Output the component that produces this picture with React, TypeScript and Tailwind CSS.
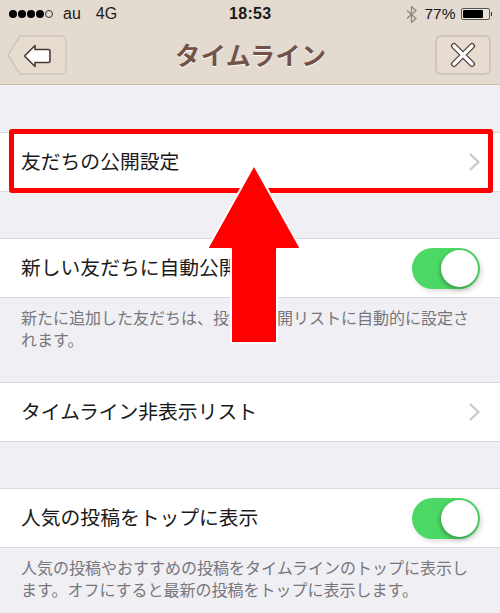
const jpFont = "font-['Liberation_Sans','Noto_Sans_CJK_JP',sans-serif]";

function SignalDots() {
  return (
    <div className="flex items-center gap-[1px]">
      {[0, 1, 2, 3].map((i) => (
        <span key={i} className="h-[8px] w-[8px] rounded-full bg-black" />
      ))}
      <span className="h-[8px] w-[8px] rounded-full border border-[#333]" />
    </div>
  );
}

function StatusBar() {
  return (
    <div className="relative flex h-[28px] items-center justify-between pl-[9px] pr-[8px] text-[16px] text-[#1c1a18]">
      <div className="flex items-center">
        <SignalDots />
        <span className="ml-[10px]">au</span>
        <span className="ml-[15px]">4G</span>
      </div>
      <span className="absolute left-[229px] text-[16px] font-bold tracking-[0.3px]">18:53</span>
      <div className="flex items-center">
        <svg width="11" height="17" viewBox="0 0 11 17" fill="none" stroke="#8a8580" strokeWidth="1.2">
          <path d="M1 4.5l9 8-4.5 4V0.5l4.5 4-9 8" />
        </svg>
        <span className="ml-[7px] text-[15.5px]">77%</span>
        <div className="ml-[5px] flex h-[12px] w-[29px] items-center rounded-[2px] border border-[#555] bg-[#e9e4dc] p-[1px]">
          <div className="h-full w-[80%] rounded-[1px] bg-black" />
        </div>
        <span className="ml-[1px] h-[4px] w-[1.5px] bg-[#333]" />
      </div>
    </div>
  );
}

function NavBar() {
  return (
    <div className="flex h-[57px] items-start justify-between border-b border-[#c9bcaf] pl-[7px] pr-[9px] pt-[7px]">
      <button className="flex h-[40px] w-[60px] items-center justify-center">
        <svg width="60" height="40" viewBox="0 0 60 40">
          <path
            d="M13 1H54a5 5 0 0 1 5 5V34a5 5 0 0 1-5 5H13L1 20Z"
            fill="#e6dcd0"
            stroke="#cfc5b8"
            strokeWidth="1.5"
            strokeLinejoin="round"
          />
          <path
            d="M17.5 21L28 10.5V14.5H41.5a1.5 1.5 0 0 1 1.5 1.5V26a1.5 1.5 0 0 1-1.5 1.5H28V31.5Z"
            fill="#fff"
            stroke="#4b3a33"
            strokeWidth="1.6"
            strokeLinejoin="round"
          />
        </svg>
      </button>
      <h1
        className={`mt-[5px] text-[25px] font-bold leading-[32px] tracking-[0.5px] text-[#73524a] [text-shadow:0_1px_0_#fff] ${jpFont}`}
      >
        タイムライン
      </h1>
      <button className="flex h-[40px] w-[56px] items-center justify-center rounded-[6px] border-2 border-[#cfc5b8] bg-[#e6dcd0]">
        <svg width="26" height="26" viewBox="0 0 26 26" strokeLinecap="round">
          <path d="M4 4L22 22M22 4L4 22" stroke="#4b3a33" strokeWidth="6" />
          <path d="M4 4L22 22M22 4L4 22" stroke="#fff" strokeWidth="3.6" />
        </svg>
      </button>
    </div>
  );
}

function Toggle() {
  return (
    <div className="flex h-[41px] w-[68px] items-center justify-end rounded-full bg-[#4cd864] p-[2px] shadow-[2px_3px_5px_rgba(0,0,0,0.12)]">
      <div className="h-[37px] w-[37px] rounded-full bg-white shadow-[-1px_2px_4px_rgba(0,0,0,0.3)]" />
    </div>
  );
}

function Chevron() {
  return (
    <svg width="11" height="18" viewBox="0 0 11 18" fill="none" stroke="#c7c7cc" strokeWidth="2.2">
      <path d="M1 1L9.5 9L1 17" />
    </svg>
  );
}

function Row({ label, action, className }: { label: string; action: 'chevron' | 'toggle'; className: string }) {
  return (
    <div
      className={`flex h-[60px] items-center justify-between border-y border-[#d9d8dc] bg-white pl-[21px] pr-[20px] text-[19.8px] text-[#1a1a1a] ${className}`}
    >
      <span className="pt-[1px]">{label}</span>
      {action === 'chevron' ? <Chevron /> : <Toggle />}
    </div>
  );
}

function Note({ children }: { children: string }) {
  return <p className="px-[21px] pt-[10px] text-[16px] leading-[22px] text-[#77767b]">{children}</p>;
}

function RedArrow() {
  return (
    <svg className="absolute left-[203px] top-[162px]" width="102" height="184" viewBox="0 0 102 184">
      <path
        d="M51 3L98 87H74V181H28V87H4Z"
        fill="#ff0000"
        stroke="#fff"
        strokeWidth="2"
        strokeLinejoin="round"
      />
    </svg>
  );
}

export default function App() {
  return (
    <div className={`relative h-[613px] w-[500px] overflow-hidden bg-[#efeff4] ${jpFont}`}>
      <div className="bg-[#e3dad0]">
        <StatusBar />
        <NavBar />
      </div>

      <Row label="友だちの公開設定" action="chevron" className="mt-[47px]" />
      <Row label="新しい友だちに自動公開" action="toggle" className="mt-[46px]" />
      <Note>新たに追加した友だちは、投稿の公開リストに自動的に設定されます。</Note>
      <Row label="タイムライン非表示リスト" action="chevron" className="mt-[30px]" />
      <Row label="人気の投稿をトップに表示" action="toggle" className="mt-[46px]" />
      <Note>人気の投稿やおすすめの投稿をタイムラインのトップに表示します。オフにすると最新の投稿をトップに表示します。</Note>

      <div className="absolute left-[9px] top-[129px] h-[64px] w-[484px] rounded-[3px] border-[5px] border-[#ff0000]" />
      <RedArrow />
    </div>
  );
}
